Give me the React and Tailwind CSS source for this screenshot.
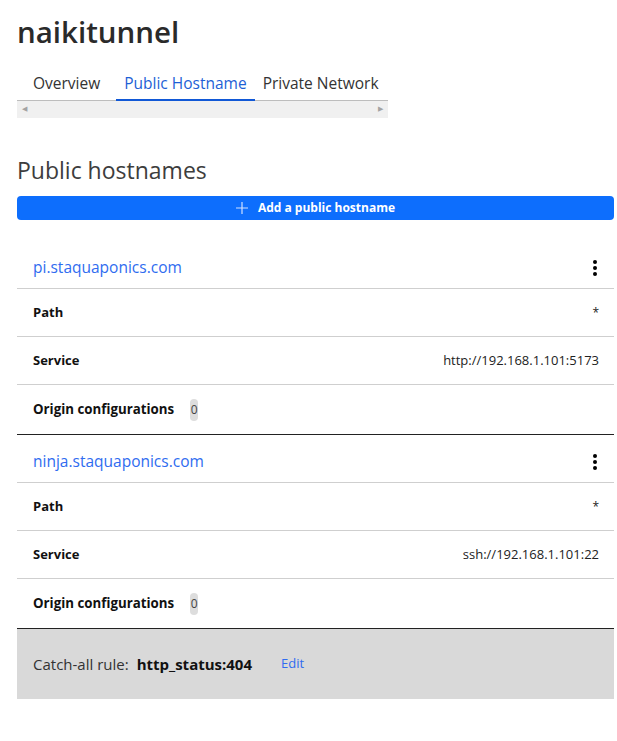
import React from "react";

const hostnames = [
  { host: "pi.staquaponics.com", path: "*", service: "http://192.168.1.101:5173", origins: 0 },
  { host: "ninja.staquaponics.com", path: "*", service: "ssh://192.168.1.101:22", origins: 0 },
];

const Kebab = () => (
  <svg width="6" height="18" viewBox="0 0 6 18" className="text-black">
    <circle cx="3" cy="3" r="2" fill="currentColor" />
    <circle cx="3" cy="9" r="2" fill="currentColor" />
    <circle cx="3" cy="15" r="2" fill="currentColor" />
  </svg>
);

const HostCard = ({ item }) => (
  <div className="border-b border-[#222]">
    <div className="flex items-center justify-between h-[48px] pl-4 pr-[14px] pt-[6px] border-b border-[#cfcfcf]">
      <a href="#" className="text-[15.5px] text-[#2f6cf0]">
        {item.host}
      </a>
      <button className="flex items-center justify-center w-[10px]">
        <Kebab />
      </button>
    </div>
    <div className="flex items-center justify-between h-[48px] pl-4 pr-[15px] border-b border-[#cfcfcf]">
      <span className="text-[13px] font-bold text-[#111]">Path</span>
      <span className="text-[12px] text-[#222]">{item.path}</span>
    </div>
    <div className="flex items-center justify-between h-[48px] pl-4 pr-[15px] border-b border-[#cfcfcf]">
      <span className="text-[13px] font-bold text-[#111]">Service</span>
      <span className="text-[13px] text-[#222]">{item.service}</span>
    </div>
    <div className="flex items-center h-[49px] pl-4 pr-4 gap-[16px]">
      <span className="text-[13.3px] font-bold text-[#111]">Origin configurations</span>
      <span className="flex items-center justify-center h-[22px] w-[8px] rounded bg-[#ddd] text-[12px] text-[#444]">
        {item.origins}
      </span>
    </div>
  </div>
);

export default function App() {
  return (
    <div
      className="bg-white min-h-screen pl-[17px] pr-[3px] pt-[12px] text-[#333]"
      style={{ fontFamily: '"Open Sans", "Noto Sans", Arial, sans-serif' }}
    >
      <h1 className="text-[29.5px] font-semibold text-[#2a2a2a] leading-[40px]">naikitunnel</h1>

      {/* tabs with horizontal scroller */}
      <div className="w-[371px] mt-[11px]">
        <div className="flex items-end border-b border-[#bdbdbd] h-[38px]">
          <div className="px-4 pb-[5px] text-[15.5px] text-[#333]">Overview</div>
          <div className="px-2 pb-[4px] text-[15.5px] text-[#1d5fd6] border-b-2 border-[#1158d6] -mb-px whitespace-nowrap">
            Public Hostname
          </div>
          <div className="px-2 pb-[5px] text-[15.5px] text-[#333] whitespace-nowrap">Private Network</div>
        </div>
        <div className="flex items-center justify-between h-[17px] bg-[#f0f0f0] px-[5px] text-[7px] text-[#a3a3a3]">
          <span>◀</span>
          <span>▶</span>
        </div>
      </div>

      <h2 className="mt-[36px] text-[23px] text-[#3d3d3d] leading-[32px]">Public hostnames</h2>

      <button className="mt-[10px] w-full h-[24px] flex items-center justify-center gap-[10px] rounded bg-[#0d6efd] text-white text-[12px] font-bold">
        <svg width="12" height="12" viewBox="0 0 12 12" className="text-[#cfe0ff]">
          <path d="M6 0v12M0 6h12" stroke="currentColor" strokeWidth="1.2" />
        </svg>
        Add a public hostname
      </button>

      <div className="mt-[21px]">
        {hostnames.map((h) => (
          <HostCard key={h.host} item={h} />
        ))}
      </div>

      <div className="flex items-center h-[70px] bg-[#d9d9d9] pl-4 text-[15px]">
        <span className="text-[#333]">Catch-all rule:</span>
        <span className="ml-[8px] font-bold text-[#111]">http_status:404</span>
        <a href="#" className="ml-[29px] text-[13px] text-[#2f6cf0]">
          Edit
        </a>
      </div>
    </div>
  );
}
